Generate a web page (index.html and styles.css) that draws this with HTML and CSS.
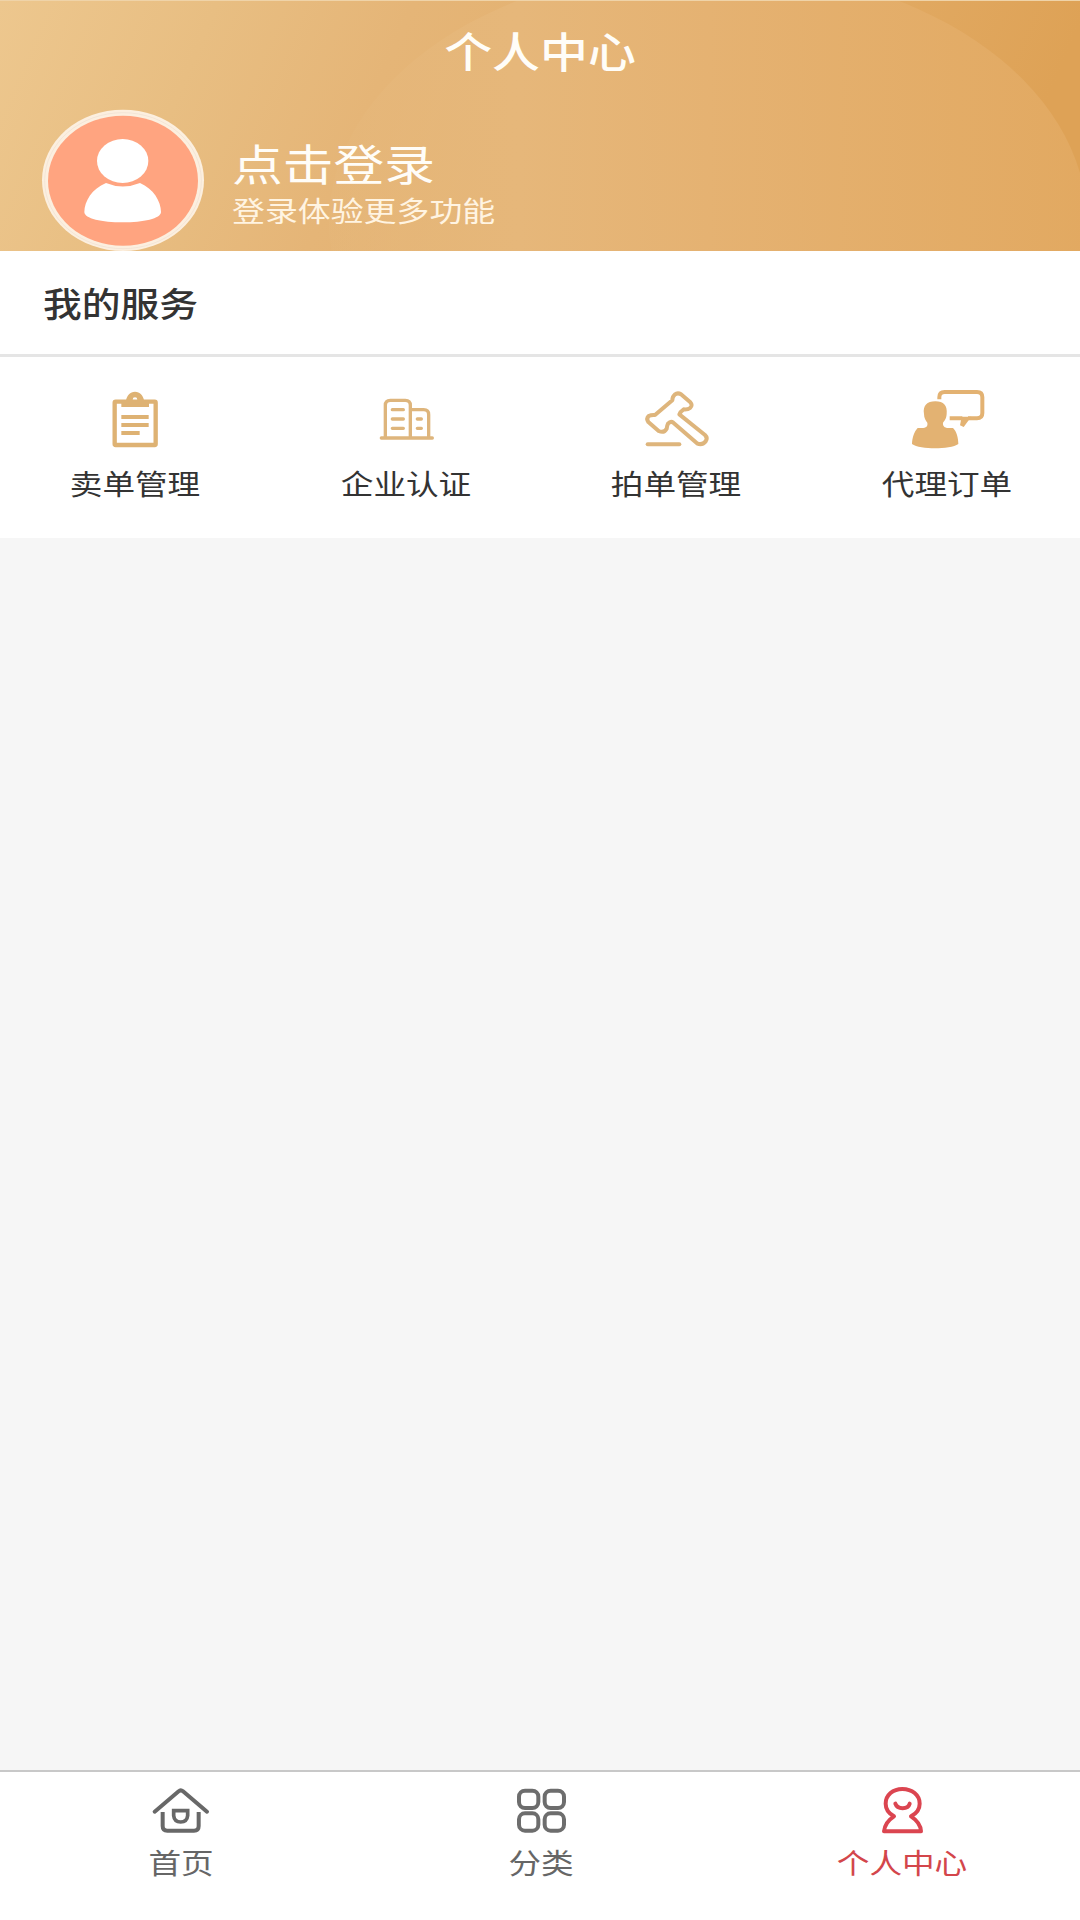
FILE: index.html
```html
<!DOCTYPE html>
<html lang="zh-CN">
<head>
<meta charset="utf-8">
<title>个人中心</title>
<link rel="stylesheet" href="styles.css">
</head>
<body>
<div class="page">
  <header class="header">
    <svg class="header-bg" viewBox="0 0 1080 251" preserveAspectRatio="none">
      <defs>
        <linearGradient id="sky" x1="0" y1="0" x2="1" y2="0.1">
          <stop offset="0" stop-color="#edc78e"/>
          <stop offset=".2" stop-color="#e8be82"/>
          <stop offset=".38" stop-color="#e5b577"/>
          <stop offset=".7" stop-color="#e3ae6a"/>
          <stop offset="1" stop-color="#dea256"/>
        </linearGradient>
        <linearGradient id="disc" x1="0" y1="0" x2="1" y2="0">
          <stop offset="0" stop-color="#e6b97d" stop-opacity=".3"/>
          <stop offset=".25" stop-color="#e6b77a"/>
          <stop offset=".5" stop-color="#e5b272"/>
          <stop offset="1" stop-color="#e2a961"/>
        </linearGradient>
      </defs>
      <rect width="1080" height="251" fill="url(#sky)"/>
      <ellipse cx="708" cy="222" rx="379" ry="256" fill="url(#disc)"/>
      <rect width="1080" height="1" fill="#efd3a8"/>
    </svg>
    <h1 class="title"><span class="wide">个人中心</span></h1>
    <div class="profile">
      <svg class="avatar" viewBox="63 57 492 426">
        <ellipse cx="309" cy="271" rx="243" ry="212" fill="#fcefdf"/>
        <ellipse cx="309" cy="272" rx="235" ry="204" fill="none" stroke="#efe0d2" stroke-width="2"/>
        <ellipse cx="309" cy="272" rx="225" ry="195" fill="#ffa480"/>
        <ellipse cx="308" cy="213" rx="77" ry="66" fill="#fff"/>
        <path d="M258 279Q308 300 360 279C400 296 423 334 423 366C423 386 370 397 308 397C246 397 193 386 193 366C193 334 216 296 258 279Z" fill="#fff"/>
      </svg>
      <div class="login">
        <div class="login-name"><span class="wide">点击登录</span></div>
        <div class="login-hint"><span class="wide">登录体验更多功能</span></div>
      </div>
    </div>
  </header>

  <h2 class="section-title"><span class="wide">我的服务</span></h2>

  <nav class="services">
    <a class="service">
      <svg class="service-icon" viewBox="120 45 270 198">
        <rect x="194" y="95" width="123" height="130" rx="3" fill="none" stroke="#deb273" stroke-width="13"/>
        <path fill-rule="evenodd" d="M214 111V91H228C231 76 240 65 255 65C270 65 279 76 282 91H297V111ZM255 82A7 7 0 1 0 255 96A7 7 0 1 0 255 82Z" fill="#deb273"/>
        <path d="M214 141H296M214 165H296M214 189H269" stroke="#deb273" stroke-width="12"/>
      </svg>
      <span class="service-label"><span class="wide">卖单管理</span></span>
    </a>
    <a class="service">
      <svg class="service-icon" viewBox="90 45 270 198" fill="none" stroke="#deb57c" stroke-width="10" stroke-linecap="round">
        <path d="M154 204H307M166 203V106Q166 91 181 91H226Q241 91 241 106V203M241 119H281Q296 119 296 134V203"/>
        <path d="M187 119H220M187 147H220M187 175H220M262 147H274M262 175H274"/>
      </svg>
      <span class="service-label"><span class="wide">企业认证</span></span>
    </a>
    <a class="service">
      <svg class="service-icon" viewBox="120 45 270 198" fill="none" stroke="#deb57c" stroke-width="12" stroke-linecap="round" stroke-linejoin="round">
        <path d="M173 223H268"/>
        <path d="M254 74Q263 67 273 73L301 97Q309 106 300 114Q294 119 281 118Q271 125 268 133L345 195Q354 204 347 214Q336 227 321 220L250 158Q242 152 234 161Q231 167 230 176Q222 190 206 183L175 156Q168 146 176 138Q184 134 195 135L247 91Q247 80 254 74Z"/>
      </svg>
      <span class="service-label"><span class="wide">拍单管理</span></span>
    </a>
    <a class="service">
      <svg class="service-icon" viewBox="90 45 270 198">
        <path d="M162 132C158 107 171 94 196 94C221 94 233 107 230 132C229 147 223 153 219 158C218 168 223 173 235 174H249C260 184 265 204 265 222C253 231 222 235 195 235C168 235 138 231 126 222C126 204 133 184 143 174H155C169 174 174 168 172 158C167 151 162 145 162 132Z" fill="#e3b272"/>
        <path d="M208 88V82Q208 66 224 66H321Q337 66 337 82V129Q337 145 321 145H294M277 145H239" fill="none" stroke="#e3b272" stroke-width="12"/>
        <path d="M275 140H304L281 171L270 166Z" fill="#e3b272"/>
      </svg>
      <span class="service-label"><span class="wide">代理订单</span></span>
    </a>
  </nav>

  <main class="content"></main>

  <nav class="tabbar">
    <a class="tab">
      <svg class="tab-icon" viewBox="90 60 180 180" fill="none" stroke="#686868" stroke-width="12" stroke-linecap="round" stroke-linejoin="round">
        <path d="M104 155L176 94Q182 88 189 94L261 155"/>
        <path d="M128 156V198Q128 212 142 212H222Q236 212 236 198V156" stroke-linecap="butt"/>
        <path d="M161 152H203V167Q201 186 182 186Q163 186 161 167Z" stroke-width="11" stroke-linejoin="miter"/>
      </svg>
      <span class="tab-label"><span class="wide">首页</span></span>
    </a>
    <a class="tab">
      <svg class="tab-icon" viewBox="90 60 180 180" fill="none" stroke="#6d6d6d" stroke-width="12">
        <rect x="117" y="92" width="58" height="52" rx="18"/>
        <rect x="194" y="92" width="58" height="52" rx="18"/>
        <rect x="117" y="160" width="58" height="52" rx="18"/>
        <rect x="194" y="160" width="58" height="52" rx="18"/>
      </svg>
      <span class="tab-label"><span class="wide">分类</span></span>
    </a>
    <a class="tab tab-active">
      <svg class="tab-icon" viewBox="150 60 180 180" fill="none" stroke="#db4550" stroke-width="12">
        <path d="M222 169C206 160 197 147 197 131C197 105 219 87 247 87C276 87 299 105 299 131C299 147 290 160 273 169C290 180 302 194 303 214H192C194 194 205 180 222 169Z" stroke-linejoin="round"/>
        <path d="M226 131C232 149 264 149 269 131" stroke-linecap="round"/>
      </svg>
      <span class="tab-label"><span class="wide">个人中心</span></span>
    </a>
  </nav>
</div>
</body>
</html>
```
FILE: styles.css
```css
* {
  box-sizing: border-box;
}

body {
  margin: 0;
  font-family: "Noto Sans CJK SC", sans-serif;
  color: #333;
}

.page {
  display: flex;
  flex-direction: column;
  width: 1080px;
  height: 1920px;
  background: #f6f6f6;
}

/* Labels are set slightly extended */
.wide {
  display: inline-block;
  white-space: nowrap;
  transform: scaleX(1.165);
}

.header {
  position: relative;
  height: 251px;
  color: #fffdf8;
}

.header-bg {
  position: absolute;
  inset: 0;
  width: 100%;
  height: 100%;
}

.title {
  position: relative;
  margin: 0;
  height: 109px;
  padding-top: 20px;
  font-size: 42px;
  font-weight: 500;
  line-height: 60px;
  text-align: center;
}

.title .wide {
  transform: scaleX(1.14);
}

.profile {
  position: relative;
  display: flex;
  padding-left: 41px;
  gap: 27px;
}

.avatar {
  width: 164px;
  height: 142px;
}

.login {
  padding-top: 23px;
}

.login .wide {
  transform-origin: left;
}

.login-name {
  font-size: 43px;
  line-height: 60px;
}

.login-name .wide {
  transform: scaleX(1.18);
}

.login-hint {
  font-size: 28px;
  line-height: 36px;
  color: #fff4e2;
}

.login-hint .wide {
  transform: scaleX(1.175);
}

.section-title {
  margin: 0;
  height: 106px;
  padding: 28px 0 0 43px;
  border-bottom: 3px solid #e5e5e5;
  background: #fff;
  font-size: 34px;
  font-weight: 500;
  line-height: 48px;
}

.section-title .wide {
  transform: scaleX(1.14);
  transform-origin: left;
}

.services {
  display: grid;
  grid-template-columns: repeat(4, 1fr);
  height: 181px;
  padding-top: 28px;
  background: #fff;
}

.service,
.tab {
  display: flex;
  flex-direction: column;
  align-items: center;
}

.service-icon {
  width: 90px;
  height: 66px;
}

.service-label {
  margin-top: 12px;
  font-size: 28px;
  line-height: 40px;
}

.service:nth-child(2) .service-label,
.service:nth-child(3) .service-label {
  padding-left: 3px;
}

.service:nth-child(4) .service-label {
  padding-left: 5px;
}

.content {
  flex: 1;
}

.tabbar {
  display: grid;
  grid-template-columns: repeat(3, 1fr);
  height: 150px;
  padding-top: 8px;
  border-top: 2px solid #c8c8c8;
  background: #fff;
}

.tab {
  color: #666;
}

.tab-icon {
  width: 60px;
  height: 60px;
}

.tab-label {
  margin-top: 2px;
  padding-left: 2px;
  font-size: 28px;
  line-height: 40px;
}

.tab-active {
  color: #d3464b;
}

.tab-active .tab-label {
  padding-left: 4px;
}
```
